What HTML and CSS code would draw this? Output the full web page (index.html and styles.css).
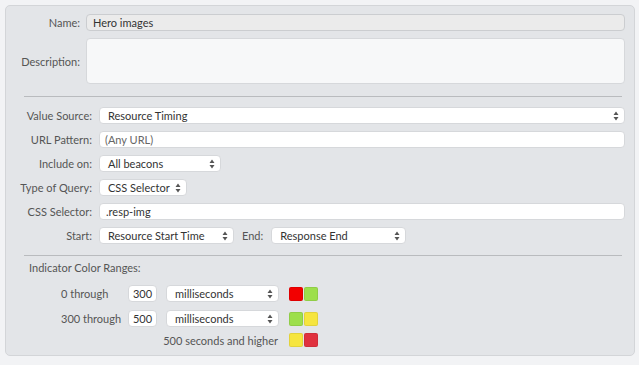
FILE: index.html
```html
<!DOCTYPE html>
<html lang="en">
<head>
    <meta charset="UTF-8">
    <meta name="viewport" content="width=device-width, initial-scale=1.0">
    <title>Metric Editor</title>
    <link rel="stylesheet" href="styles.css">
</head>
<body>
    <div class="panel">
        <div class="form-top">
            <label>Name:</label>
            <div class="field name-field">Hero images</div>

            <label>Description:</label>
            <div class="field desc-field"></div>
        </div>

        <div class="separator"></div>

        <div class="form-main">
            <label>Value Source:</label>
            <div class="field select wide">
                <span>Resource Timing</span>
                <svg class="arrows" width="6" height="10" viewBox="0 0 6 10"><path d="M3 0.5 L5.5 4 L0.5 4 Z M3 9.5 L5.5 6 L0.5 6 Z" fill="#555"/></svg>
            </div>

            <label>URL Pattern:</label>
            <div class="field text placeholder">(Any URL)</div>

            <label>Include on:</label>
            <div class="field select include">
                <span>All beacons</span>
                <svg class="arrows" width="6" height="10" viewBox="0 0 6 10"><path d="M3 0.5 L5.5 4 L0.5 4 Z M3 9.5 L5.5 6 L0.5 6 Z" fill="#555"/></svg>
            </div>

            <label>Type of Query:</label>
            <div class="field select query">
                <span>CSS Selector</span>
                <svg class="arrows" width="6" height="10" viewBox="0 0 6 10"><path d="M3 0.5 L5.5 4 L0.5 4 Z M3 9.5 L5.5 6 L0.5 6 Z" fill="#555"/></svg>
            </div>

            <label>CSS Selector:</label>
            <div class="field text">.resp-img</div>

            <label>Start:</label>
            <div class="range-row">
                <div class="field select timing">
                    <span>Resource Start Time</span>
                    <svg class="arrows" width="6" height="10" viewBox="0 0 6 10"><path d="M3 0.5 L5.5 4 L0.5 4 Z M3 9.5 L5.5 6 L0.5 6 Z" fill="#555"/></svg>
                </div>
                <label class="end-label">End:</label>
                <div class="field select timing">
                    <span>Response End</span>
                    <svg class="arrows" width="6" height="10" viewBox="0 0 6 10"><path d="M3 0.5 L5.5 4 L0.5 4 Z M3 9.5 L5.5 6 L0.5 6 Z" fill="#555"/></svg>
                </div>
            </div>
        </div>

        <div class="separator lower"></div>

        <div class="colors-title">Indicator Color Ranges:</div>

        <div class="colors">
            <span class="through">0 through</span>
            <div class="field num">300</div>
            <div class="field select unit">
                <span>milliseconds</span>
                <svg class="arrows" width="6" height="10" viewBox="0 0 6 10"><path d="M3 0.5 L5.5 4 L0.5 4 Z M3 9.5 L5.5 6 L0.5 6 Z" fill="#555"/></svg>
            </div>
            <div class="swatches"><span class="swatch red"></span><span class="swatch green"></span></div>

            <span class="through">300 through</span>
            <div class="field num">500</div>
            <div class="field select unit">
                <span>milliseconds</span>
                <svg class="arrows" width="6" height="10" viewBox="0 0 6 10"><path d="M3 0.5 L5.5 4 L0.5 4 Z M3 9.5 L5.5 6 L0.5 6 Z" fill="#555"/></svg>
            </div>
            <div class="swatches"><span class="swatch green"></span><span class="swatch yellow"></span></div>

            <span class="higher">500 seconds and higher</span>
            <div class="swatches"><span class="swatch yellow"></span><span class="swatch crimson"></span></div>
        </div>
    </div>
</body>
</html>
```

FILE: styles.css
```css
* {
    margin: 0;
    padding: 0;
    box-sizing: border-box;
    font-family: Lato, "Open Sans", sans-serif;
}

body {
    background: #f2f3f5;
    padding: 5px 5px 0 5px;
    font-size: 11px;
    color: #444;
}

.panel {
    width: 630px;
    height: 351px;
    background: #e3e5e8;
    border: 1px solid #d3d5d8;
    border-radius: 5px;
    padding: 8px 9px 0 0;
}

label {
    text-align: right;
    color: #555;
    line-height: 17px;
}

.field {
    height: 17px;
    background: #fff;
    border: 1px solid #d6d8db;
    border-radius: 4px;
    line-height: 15px;
    color: #333;
    white-space: nowrap;
}

.form-top {
    display: grid;
    grid-template-columns: 74px 1fr;
    column-gap: 6px;
    row-gap: 7px;
}

.form-top label {
    align-self: center;
}

.name-field {
    background: #ebebeb;
    border-color: #cbcdd0;
    padding-left: 6px;
}

.desc-field {
    height: 46px;
    background: #f7f8f9;
}

.separator {
    height: 1px;
    background: #b9bbbe;
    margin: 12px 3px 0 18px;
}

.form-main {
    display: grid;
    grid-template-columns: 86px 1fr;
    column-gap: 7px;
    row-gap: 7px;
    margin-top: 10px;
}

.text {
    padding-left: 6px;
}

.placeholder {
    color: #666;
    padding-left: 5px;
}

.select {
    display: flex;
    align-items: center;
    justify-content: space-between;
    padding: 0 5px 0 8px;
}

.arrows {
    flex-shrink: 0;
}

.include {
    width: 122px;
}

.query {
    width: 88px;
}

.range-row {
    display: flex;
    align-items: center;
}

.timing {
    width: 135px;
}

.end-label {
    margin: 0 8px;
}

.lower {
    margin-top: 11px;
}

.colors-title {
    margin: 5px 0 0 23px;
    line-height: 14px;
    color: #555;
}

.colors {
    display: grid;
    grid-template-columns: 67px 38px 123px auto;
    row-gap: 8px;
    align-items: center;
    margin: 10px 0 0 55px;
}

.colors .num {
    width: 29px;
    text-align: center;
}

.colors .unit {
    width: 113px;
}

.through {
    color: #555;
}

.higher {
    grid-column: 1 / 4;
    text-align: right;
    color: #555;
    margin-top: -2px;
    padding-right: 11px;
}

.swatches {
    display: flex;
    gap: 1px;
}

.higher + .swatches {
    margin-top: -2px;
}

.swatch {
    width: 14px;
    height: 14px;
    border-radius: 2px;
    border: 1px solid rgba(0, 0, 0, 0.08);
}

.red {
    background: #f20000;
}

.green {
    background: #9ddf4c;
}

.yellow {
    background: #f6e53f;
}

.crimson {
    background: #e0313f;
}
```
